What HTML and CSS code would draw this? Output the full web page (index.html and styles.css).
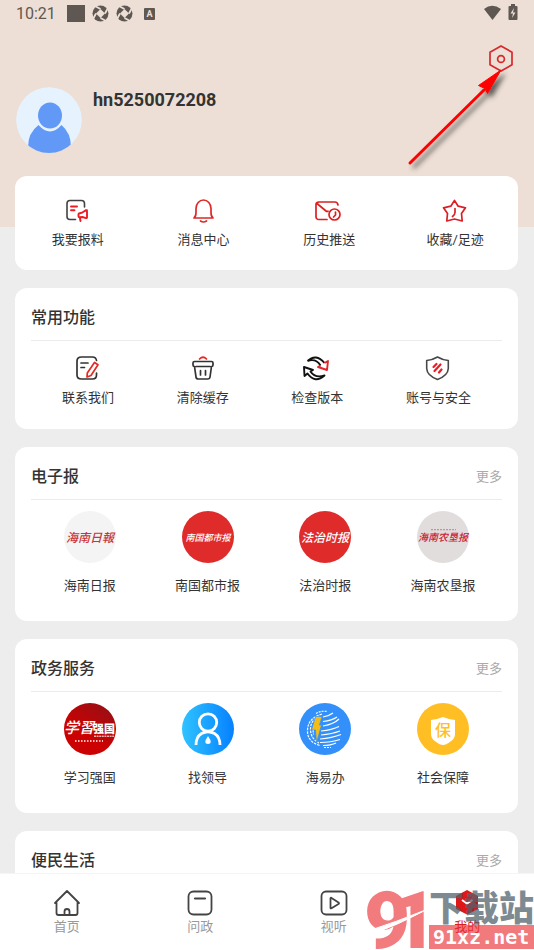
FILE: index.html
```html
<!DOCTYPE html>
<html lang="zh-CN">
<head>
<meta charset="utf-8">
<meta name="viewport" content="width=device-width, initial-scale=1">
<title>我的</title>
<link rel="stylesheet" href="styles.css">
</head>
<body>
<div class="app">
  <main class="content">
    <header class="hero">
      <div class="status">
        <span class="clock">10:21</span>
        <svg class="status-icons" viewBox="0 0 90 20" fill="#5f5852" aria-hidden="true">
          <rect x="0" y="1" width="18" height="17"/>
          <g id="pinwheel">
            <circle cx="33.500" cy="9.500" r="8"/>
            <path d="M33.500 5l4.500 4.500-4.500 4.500-4.500-4.500z" fill="#eddfd5"/>
            <path d="M33.500 5l-5.500-3M38 9.500l3-5.500M33.500 14l5.500 3M29 9.500l-3 5.500" stroke="#eddfd5" stroke-width="1.800"/>
          </g>
          <use href="#pinwheel" x="24"/>
          <rect x="77" y="4" width="11" height="12" rx="1"/>
          <text x="82.500" y="13" text-anchor="middle" class="badge-letter">A</text>
        </svg>
        <svg class="status-power" viewBox="0 0 34 18" fill="#5f5852" aria-hidden="true">
          <path d="M0 4Q8-2.500 17 4L8.500 15z"/>
          <path d="M27 1V-1h4v2h1.500q1 0 1 1v12q0 1-1 1h-7q-1 0-1-1V2q0-1 1-1z"/>
          <path d="M30 3l-3.500 5.500H29L28 13l3.500-5.500H29z" fill="#eddfd5"/>
        </svg>
      </div>
      <div class="toolbar">
        <button class="settings" type="button" aria-label="设置">
          <svg viewBox="0 0 26 28" fill="none" stroke="#d9282b" stroke-width="1.700"><path d="M13 2l11 6.200v12.600L13 27 2 20.800V8.200z"/><circle cx="13" cy="15" r="3.400"/></svg>
        </button>
      </div>
      <div class="profile">
        <svg class="avatar" viewBox="0 0 66 66" role="img" aria-label="头像">
          <defs><clipPath id="round"><circle cx="33" cy="33" r="33"/></clipPath></defs>
          <g clip-path="url(#round)">
            <circle cx="33" cy="33" r="33" fill="#e6f2fe"/>
            <ellipse cx="34" cy="28.500" rx="12" ry="13" fill="#6299f6"/>
            <path d="M22.500 38q11.500 13 23 0Q55 46 55 60v6H12v-6q0-14 10.500-22z" fill="#6299f6"/>
          </g>
        </svg>
        <h1 class="username">hn5250072208</h1>
      </div>
      <svg class="arrow" viewBox="0 0 104 108" aria-hidden="true">
        <defs><filter id="shade" x="-20%" y="-20%" width="150%" height="150%"><feDropShadow dx="4" dy="4" stdDeviation="2.500" flood-color="#333" flood-opacity=".75"/></filter></defs>
        <g filter="url(#shade)"><path d="M6 97L80 24" stroke="#f00" stroke-width="3" stroke-linecap="round"/><path d="M97 4L83.500 27.500l-2.500-5-6.500-3z" fill="#f00" stroke="#f00"/></g>
      </svg>
    </header>

    <div class="cards">
      <nav class="card quick" aria-label="快捷入口">
        <a class="item" href="#">
          <svg class="icon" viewBox="0 0 24 24" fill="none" stroke="#424242" stroke-width="1.600" stroke-linecap="round"><path d="M18.500 8V4.500q0-3-3-3H4q-3 0-3 3v13q0 3 3 3h5.500"/><path d="M5 7.500h6M5 11.200h3.500M13 14.500l3-.8 4-2.500q1-.4 1 .6v6.500q0 1-1 .8L16.500 18l-3 .2q-1 0-1-1v-1.700q0-.8.500-1zm.8 4 .7 3.500" stroke="#ed1c24" stroke-width="1.900"/></svg>
          <span>我要报料</span>
        </a>
        <a class="item" href="#">
          <svg class="icon" viewBox="0 0 24 24" fill="none" stroke="#dc2a2a" stroke-width="1.700" stroke-linejoin="round" stroke-linecap="round"><path d="M2 19q2-1.500 2-5.500V9.500a7.500 8.500 0 0 1 15 0v4q0 4 2 5.500zM8.500 22q3 2 6 0"/></svg>
          <span>消息中心</span>
        </a>
        <a class="item" href="#">
          <svg class="icon" viewBox="0 0 24 24" fill="none" stroke="#dc2020" stroke-width="1.700" stroke-linecap="round" stroke-linejoin="round"><path d="M10 20.500H2q-3 0-3-3v-12q0-2.500 3-2.500h16q2.500 0 3 3M0 4.500l9 7.500q1 .8 2 .2"/><circle cx="17.500" cy="15.500" r="5.500"/><path d="M18.500 13v3l-2 2"/></svg>
          <span>历史推送</span>
        </a>
        <a class="item" href="#">
          <svg class="icon" viewBox="0 0 24 24" fill="none" stroke="#d92027" stroke-width="1.700" stroke-linecap="round" stroke-linejoin="round"><path d="M11.500 1.500l3.700 5.700 7.300 1.600-4 5.700.7 7.500-7.700-2-7.700 2 .7-7.500-4-5.700 7.300-1.600z"/><path d="M12 9.500v4q0 2-2.500 4"/></svg>
          <span>收藏/足迹</span>
        </a>
      </nav>

      <section class="card">
        <div class="card-head"><h2>常用功能</h2></div>
        <div class="tools">
          <a class="item" href="#">
            <svg class="icon" viewBox="0 0 24 24" fill="none" stroke="#333" stroke-width="1.700" stroke-linecap="round"><path d="M20.500 4.500q-.5-3.500-4-3.500h-11Q1 1 1 5v14q0 4 4.500 4h11q4 0 4-4v-2M5 7h7M5 11.500h3.500"/><path d="M18.500 6.500l3.500 2.300-7 10.700-4 1.500.3-4z" stroke="#e42a24" stroke-linejoin="round"/></svg>
            <span>联系我们</span>
          </a>
          <a class="item" href="#">
            <svg class="icon" viewBox="0 0 24 24" fill="none" stroke="#333" stroke-width="1.700" stroke-linecap="round" stroke-linejoin="round"><path d="M3.500 5.500h17q1.500 0 1.500 1.500v2q0 1.500-1.500 1.500L19 21q-.3 2-2.300 2H7.300Q5.300 23 5 21L3.500 10.500Q2 10.500 2 9V7q0-1.500 1.500-1.500zM5 10.500h14M9.500 14.500V19M14.500 14.500V19"/><path d="M8.500 3q3.500-3.500 7 0" stroke="#e42a24"/></svg>
            <span>清除缓存</span>
          </a>
          <a class="item" href="#">
            <svg class="icon" viewBox="0 0 24 24" fill="none" stroke="#111" stroke-width="1.900" stroke-linejoin="round"><path d="M2.500 5Q11-3 19.500 7M2.500 5Q11 2 15.500 9.500"/><path d="M19.500 7l3.500-2-1 9-9-3 2.500-1.500" stroke="#e3262b"/><path d="M19.500 19.500Q10 28 2.500 17.500L-.5 20-1 11l9 3-2.500 1.500Q10 22.500 19.500 19.500z"/></svg>
            <span>检查版本</span>
          </a>
          <a class="item" href="#">
            <svg class="icon" viewBox="0 0 24 24" fill="none" stroke="#484848" stroke-width="1.600" stroke-linejoin="round"><path d="M11.500 1q5 3 10.800 3.500v8Q22 19.500 11.500 23.500 1 19.500.7 12.500v-8Q6.500 4 11.500 1z"/><path d="M7.500 11L10.500 8M8.500 15l6-6.500M13 16.500l2.500-3" stroke="#ed1c24" stroke-width="2.200" stroke-linecap="round"/></svg>
            <span>账号与安全</span>
          </a>
        </div>
      </section>

      <section class="card">
        <div class="card-head"><h2>电子报</h2><a class="more" href="#">更多</a></div>
        <div class="services">
          <a class="item" href="#">
            <svg class="logo" viewBox="0 0 52 52" aria-hidden="true"><circle cx="26" cy="26" r="26" fill="#f4f4f4"/><text class="script script-12" x="26" y="31" fill="#c7363a">海南日報</text></svg>
            <span>海南日报</span>
          </a>
          <a class="item" href="#">
            <svg class="logo" viewBox="0 0 52 52" aria-hidden="true"><circle cx="26" cy="26" r="26" fill="#e02b2b"/><text class="script script-9" x="26" y="30" fill="#fff">南国都市报</text></svg>
            <span>南国都市报</span>
          </a>
          <a class="item" href="#">
            <svg class="logo" viewBox="0 0 52 52" aria-hidden="true"><circle cx="26" cy="26" r="26" fill="#e02b2b"/><text class="script script-12" x="26" y="31" fill="#fff">法治时报</text></svg>
            <span>法治时报</span>
          </a>
          <a class="item" href="#">
            <svg class="logo" viewBox="0 0 52 52" aria-hidden="true"><circle cx="26" cy="26" r="26" fill="#e1dddd"/><path d="M14 18.700h25" stroke="#d07880" stroke-dasharray="2 1"/><text class="script script-10" x="26" y="30" fill="#cc2239">海南农垦报</text></svg>
            <span>海南农垦报</span>
          </a>
        </div>
      </section>

      <section class="card">
        <div class="card-head"><h2>政务服务</h2><a class="more" href="#">更多</a></div>
        <div class="services">
          <a class="item" href="#">
            <svg class="logo" viewBox="0 0 52 52" aria-hidden="true">
              <defs><linearGradient id="deep" x1=".8" y1="0" x2=".4" y2=".6"><stop stop-color="#961015"/><stop offset="1" stop-color="#cb0102"/></linearGradient></defs>
              <circle cx="26" cy="26" r="26" fill="url(#deep)"/>
              <text class="script script-15" x="15" y="30" fill="#fff">学習</text>
              <text class="stamp" x="40" y="29.500">强国</text>
              <path d="M30 33.200h20" stroke="#fff" stroke-dasharray="2 .6"/>
              <path d="M11 38h28" stroke="#fff" stroke-width="1.500" stroke-dasharray="1.500 1.500"/>
            </svg>
            <span>学习强国</span>
          </a>
          <a class="item" href="#">
            <svg class="logo" viewBox="0 0 52 52" aria-hidden="true">
              <defs><linearGradient id="sky"><stop stop-color="#2fc3ff"/><stop offset="1" stop-color="#0681ff"/></linearGradient></defs>
              <circle cx="26" cy="26" r="26" fill="url(#sky)"/>
              <g fill="none" stroke="#fff" stroke-width="2.800"><circle cx="26" cy="19.500" r="8.700"/><path d="M14 42q0-8 5.500-11.500 6.500-3.500 13 0Q38 34 38 42"/></g>
              <path d="M26 33q5.500 8 0 8t0-8z" fill="#fff"/>
            </svg>
            <span>找领导</span>
          </a>
          <a class="item" href="#">
            <svg class="logo" viewBox="0 0 52 52" aria-hidden="true">
              <circle cx="26" cy="26" r="26" fill="#3390fb"/>
              <g fill="none" stroke="#fff" stroke-width="1.200">
                <path d="M24 14q6-1 10-4M24 18.500q9-1 14-4.500M24 23q11-2 16-7M22 28q11-1 18-4.500M22 32q11-1 19-4M21 36q12-1 21-4.500M21 39.500q11 0 20-3M24 42.500q8 0 13-2.500"/>
                <path d="M23 11q-14 4-14.500 16T21 42.500M20 13.500Q11 18 11.500 27T20 40M18 17.500q-5 5-3.500 14" stroke-dasharray="2.500 1"/>
                <path d="M17 10.500q5-3 11-2M25 44.500h7" stroke-dasharray="2 1"/>
              </g>
              <path d="M16.500 13.500h6.500L20.500 22h2L17.500 40l-1-13h-4z" fill="#f3bd15" stroke="#3390fb" stroke-width=".7"/>
            </svg>
            <span>海易办</span>
          </a>
          <a class="item" href="#">
            <svg class="logo" viewBox="0 0 52 52" aria-hidden="true">
              <circle cx="26" cy="26" r="26" fill="#ffbf24"/>
              <path d="M26 14q6 2.500 12 3v14q0 5-4.500 7.500Q29 42 26 42t-7.500-3.500Q14 36 14 31V17q6-.5 12-3z" fill="#fff"/>
              <text class="shield-text" x="26" y="33">保</text>
            </svg>
            <span>社会保障</span>
          </a>
        </div>
      </section>

      <section class="card">
        <div class="card-head"><h2>便民生活</h2><a class="more" href="#">更多</a></div>
      </section>
    </div>
  </main>

  <nav class="tabs" aria-label="主导航">
    <a class="tab" href="#">
      <svg viewBox="0 0 26 26" fill="none" stroke="#444" stroke-width="1.800" stroke-linejoin="round" stroke-linecap="round"><path d="M1 13L13 1l12 12M2.500 12.500V23q0 2 2 2h17q2 0 2-2V12.500M10.500 25v-3.500q0-2.500 2.500-2.500t2.500 2.500V25"/></svg>
      <span>首页</span>
    </a>
    <a class="tab" href="#">
      <svg viewBox="0 0 26 26" fill="none" stroke="#444" stroke-width="1.800" stroke-linecap="round"><rect x="1.500" y="1.500" width="23" height="23" rx="5"/><path d="M8 8.500h10" stroke-width="2.200"/></svg>
      <span>问政</span>
    </a>
    <a class="tab" href="#">
      <svg viewBox="0 0 26 26" fill="none" stroke="#444" stroke-width="1.800" stroke-linejoin="round"><rect x=".5" y="1.500" width="25" height="23" rx="4.500"/><path d="M9.500 8.300v9.400q0 1 1 .5l7-4.200q1-.8 0-1.600l-7-4.500q-1-.4-1 .4z"/></svg>
      <span>视听</span>
    </a>
    <a class="tab active" href="#" aria-current="page">
      <svg viewBox="0 0 26 26"><path d="M13 0l11 6v13l-11 5.500L2 19V6z" fill="#df1719"/><path d="M13 13.500l11-6V19l-11 5.500z" fill="#c8151a"/><path d="M8 10l5 3.500 5.500-3.500" fill="none" stroke="#fff" stroke-width="2"/></svg>
      <span>我的</span>
    </a>
    <svg class="watermark" viewBox="0 0 170 60" aria-hidden="true">
      <text class="mark-number" y="58"><tspan x="0">9</tspan><tspan x="27">1</tspan></text>
      <path d="M4 41q28-9 60-22-30 16-58 26z" fill="#fff" stroke="#fff"/>
      <text class="mark-name" x="65" y="31">下载站</text>
      <rect class="mark-bar" x="65" y="35" width="105" height="24"/>
      <text class="mark-site" x="69" y="54">91xz.net</text>
    </svg>
  </nav>
</div>
</body>
</html>
```
FILE: styles.css
```css
* {
  box-sizing: border-box;
}

body {
  margin: 0;
  background: #ededed;
  color: #333;
  font-family: Roboto, "Noto Sans CJK SC", sans-serif;
  font-size: 13px;
  line-height: 20px;
}

h1,
h2 {
  margin: 0;
  font-weight: 500;
}

a {
  color: inherit;
  text-decoration: none;
}

svg {
  display: block;
  overflow: visible;
}

.app {
  display: flex;
  flex-direction: column;
  height: 100vh;
}

.content {
  flex: 1;
  min-height: 0;
  overflow: hidden;
}

.hero {
  position: relative;
  padding: 0 16px 74px;
  background: #eddfd5;
}

.status {
  display: flex;
  align-items: center;
  height: 28px;
}

.clock {
  color: #5f5852;
  font-size: 16px;
}

.status-icons {
  width: 90px;
  height: 20px;
  margin-left: 11px;
}

.badge-letter {
  fill: #eddfd5;
  font-size: 9px;
  font-weight: 700;
}

.status-power {
  width: 34px;
  height: 18px;
  margin-left: auto;
}

.toolbar {
  display: flex;
  justify-content: flex-end;
  height: 59px;
  padding: 16px 4px 0 0;
}

.settings {
  width: 26px;
  height: 28px;
  padding: 0;
  border: 0;
  background: none;
}

.profile {
  display: flex;
  gap: 11px;
}

.avatar {
  width: 66px;
  height: 66px;
}

.username {
  padding-top: 2px;
  font-size: 18px;
  line-height: 22px;
  font-weight: 700;
}

.arrow {
  position: absolute;
  top: 66px;
  right: 26px;
  width: 104px;
  height: 108px;
}

.cards {
  position: relative;
  display: flex;
  flex-direction: column;
  gap: 18px;
  margin-top: -51px;
  padding: 0 16px 0 15px;
}

.card {
  border-radius: 12px;
  background: #fff;
}

.card-head {
  display: flex;
  justify-content: space-between;
  margin: 0 16px;
  padding: 19px 0 11px;
  border-bottom: 1px solid #ebebeb;
  line-height: 22px;
}

.card-head h2 {
  font-size: 16px;
}

.more {
  color: #aaa;
}

.item {
  display: flex;
  flex-direction: column;
  align-items: center;
}

.icon {
  width: 24px;
  height: 24px;
}

.quick {
  display: grid;
  grid-template-columns: repeat(4, 1fr);
  padding: 23px 0 20px;
}

.quick .item {
  gap: 7px;
}

.tools {
  display: flex;
  justify-content: space-between;
  padding: 15px 47px 21px;
}

.tools .item {
  gap: 8px;
}

.services {
  display: grid;
  grid-template-columns: repeat(4, 1fr);
  padding: 11px 16px 25px;
}

.services .item {
  gap: 13px;
}

.logo {
  width: 52px;
  height: 52px;
}

.script {
  font-style: italic;
  font-weight: 500;
  text-anchor: middle;
}

.script-9 {
  font-size: 9px;
}

.script-10 {
  font-size: 10px;
}

.script-12 {
  font-size: 12px;
}

.script-15 {
  font-size: 15px;
}

.stamp {
  fill: #fff;
  font-size: 11px;
  font-weight: 900;
  text-anchor: middle;
}

.shield-text {
  fill: #ffbf24;
  font-size: 16px;
  font-weight: 500;
  text-anchor: middle;
}

.tabs {
  position: relative;
  display: grid;
  grid-template-columns: repeat(4, 1fr);
  padding: 16px 0 13px;
  border-top: 1px solid #f5f5f5;
  background: #fff;
}

.tab {
  display: flex;
  flex-direction: column;
  align-items: center;
  gap: 1px;
  color: #999;
}

.tab svg {
  width: 26px;
  height: 26px;
}

.active {
  color: #d9201f;
}

.watermark {
  position: absolute;
  right: 0;
  bottom: 0;
  width: 170px;
  height: 60px;
  pointer-events: none;
}

.mark-number {
  fill: #f27b7e;
  font-family: Roboto, sans-serif;
  font-size: 80px;
  font-weight: 900;
}

.mark-name {
  fill: #52636e;
  fill-opacity: 0.75;
  font-size: 35px;
  font-weight: 900;
}

.mark-bar {
  fill: #e93238;
  fill-opacity: 0.65;
}

.mark-site {
  fill: #fff;
  font-family: "DejaVu Sans Mono", monospace;
  font-size: 20px;
  font-weight: 700;
}
```
